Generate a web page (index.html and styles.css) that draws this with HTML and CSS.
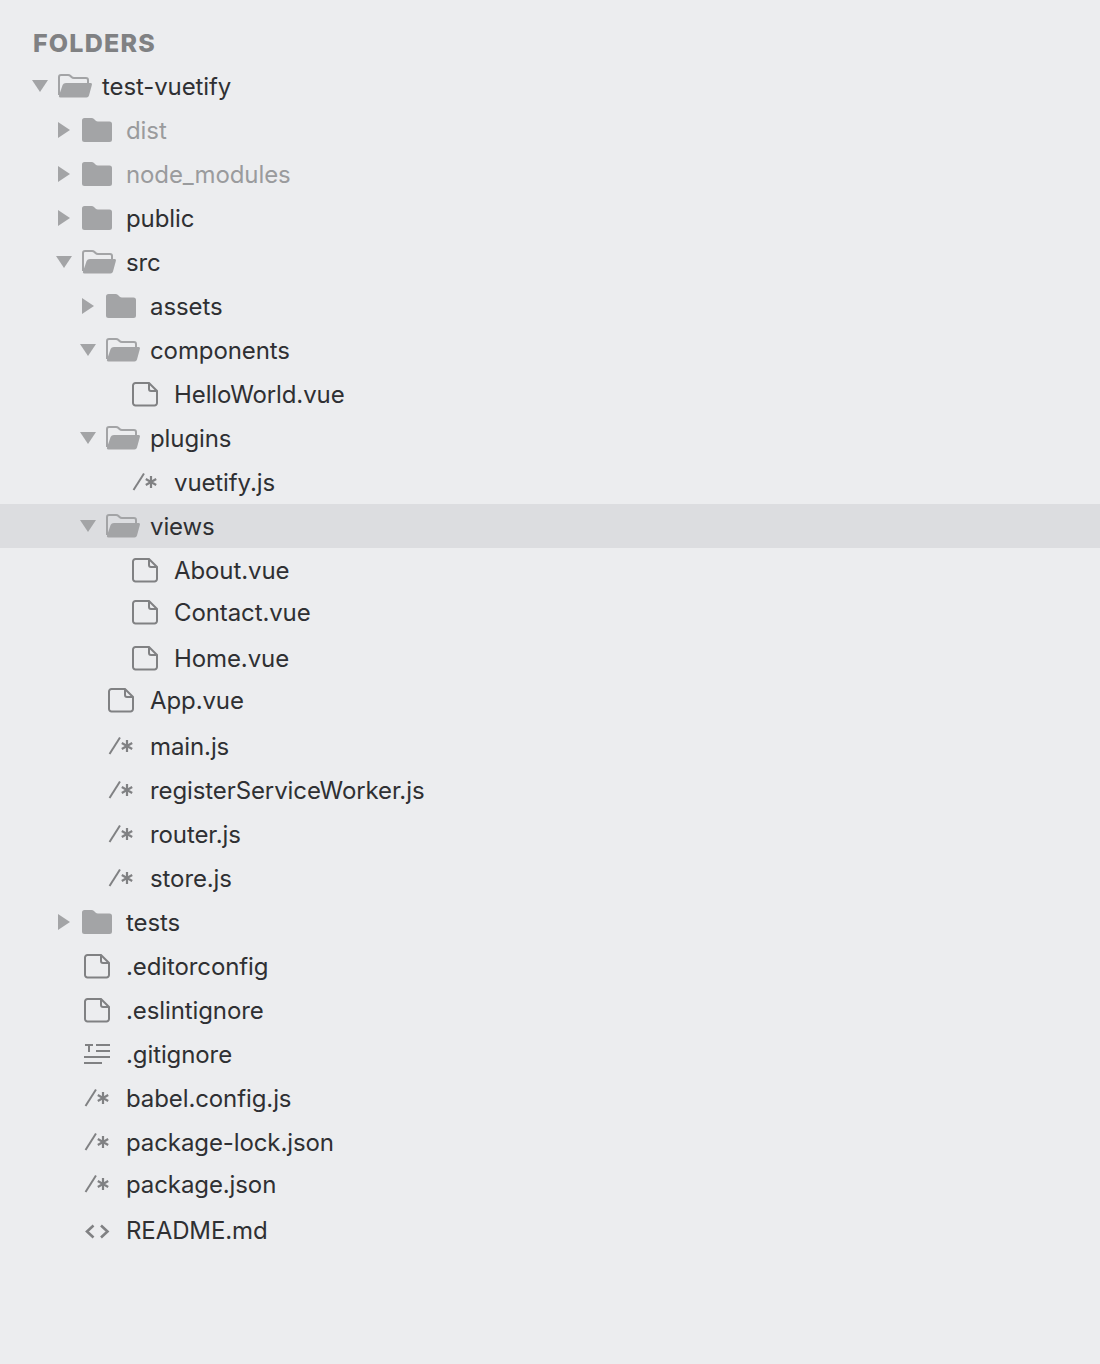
FILE: index.html
```html
<!DOCTYPE html>
<html lang="en">
<head>
<meta charset="utf-8">
<title>Folders</title>
<link rel="stylesheet" href="styles.css">
</head>
<body>
<svg class="defs" width="0" height="0" aria-hidden="true">
  <symbol id="arrow-right" viewBox="0 0 26 24"><path d="M2 3 L14 11 L2 19 Z"/></symbol>
  <symbol id="arrow-down" viewBox="0 0 26 24"><path d="M0 5 H16 L8 17 Z"/></symbol>
  <symbol id="folder" viewBox="0 0 34 26"><path d="M0 2.5 A2.5 2.5 0 0 1 2.5 0 H9.5 Q11 0 12 1 L13.5 2.5 Q14.5 3.5 16 3.5 H27.5 A2.5 2.5 0 0 1 30 6 V21.5 A2.5 2.5 0 0 1 27.5 24 H2.5 A2.5 2.5 0 0 1 0 21.5 Z"/></symbol>
  <symbol id="folder-open" viewBox="0 0 34 26"><path d="M1 21 V3 Q1 1 3 1 H10 Q11.5 1 12.5 2 L13.5 3 Q14.5 4 16 4 H28 Q30 4 30 6 V9" fill="none" stroke="currentColor" stroke-width="2"/><path d="M8 9 H32.5 Q34.3 9 33.9 10.7 L31 21.5 Q30.4 23.5 28.5 23.5 H2.5 Q0.5 23.5 1 21.5 L4.6 11 Q5.4 9 8 9 Z"/></symbol>
  <symbol id="file" viewBox="0 0 28 26"><path d="M3.5 1 H17 L25 9 V21 A2.5 2.5 0 0 1 22.5 23.5 H3.5 A2.5 2.5 0 0 1 1 21 V3.5 A2.5 2.5 0 0 1 3.5 1 Z M17 1 V7 A2 2 0 0 0 19 9 H25" fill="none" stroke="currentColor" stroke-width="2"/></symbol>
  <symbol id="comment" viewBox="0 0 28 26"><path d="M1.5 20 L12 3.5" fill="none" stroke="currentColor" stroke-width="2"/><path d="M19 6 V18 M13.8 9 L24.2 15 M24.2 9 L13.8 15" fill="none" stroke="currentColor" stroke-width="2.2"/></symbol>
  <symbol id="lines" viewBox="0 0 28 26"><path d="M1 3 H9 M5 3 V10 M12 3 H26 M12 9 H26 M0 15 H26 M0 21 H18" fill="none" stroke="currentColor" stroke-width="2"/></symbol>
  <symbol id="code" viewBox="0 0 28 26"><path d="M9.5 7.5 L3 13.5 L9.5 19.5 M17 7.5 L23.5 13.5 L17 19.5" fill="none" stroke="currentColor" stroke-width="2.6"/></symbol>
</svg>
<aside class="sidebar">
  <h2 class="heading">FOLDERS</h2>
  <ul class="tree">
    <li class="row l0"><svg class="arrow"><use href="#arrow-down"/></svg><svg class="icon"><use href="#folder-open"/></svg><span class="name">test-vuetify</span></li>
    <li class="row l1 muted"><svg class="arrow"><use href="#arrow-right"/></svg><svg class="icon"><use href="#folder"/></svg><span class="name">dist</span></li>
    <li class="row l1 muted"><svg class="arrow"><use href="#arrow-right"/></svg><svg class="icon"><use href="#folder"/></svg><span class="name">node_modules</span></li>
    <li class="row l1"><svg class="arrow"><use href="#arrow-right"/></svg><svg class="icon"><use href="#folder"/></svg><span class="name">public</span></li>
    <li class="row l1"><svg class="arrow"><use href="#arrow-down"/></svg><svg class="icon"><use href="#folder-open"/></svg><span class="name">src</span></li>
    <li class="row l2"><svg class="arrow"><use href="#arrow-right"/></svg><svg class="icon"><use href="#folder"/></svg><span class="name">assets</span></li>
    <li class="row l2"><svg class="arrow"><use href="#arrow-down"/></svg><svg class="icon"><use href="#folder-open"/></svg><span class="name">components</span></li>
    <li class="row l3"><span class="slot"></span><svg class="icon file"><use href="#file"/></svg><span class="name">HelloWorld.vue</span></li>
    <li class="row l2"><svg class="arrow"><use href="#arrow-down"/></svg><svg class="icon"><use href="#folder-open"/></svg><span class="name">plugins</span></li>
    <li class="row l3"><span class="slot"></span><svg class="icon file"><use href="#comment"/></svg><span class="name">vuetify.js</span></li>
    <li class="row l2 selected"><svg class="arrow"><use href="#arrow-down"/></svg><svg class="icon"><use href="#folder-open"/></svg><span class="name">views</span></li>
    <li class="row l3"><span class="slot"></span><svg class="icon file"><use href="#file"/></svg><span class="name">About.vue</span></li>
    <li class="row l3 up"><span class="slot"></span><svg class="icon file"><use href="#file"/></svg><span class="name">Contact.vue</span></li>
    <li class="row l3"><span class="slot"></span><svg class="icon file"><use href="#file"/></svg><span class="name">Home.vue</span></li>
    <li class="row l2 up"><span class="slot"></span><svg class="icon file"><use href="#file"/></svg><span class="name">App.vue</span></li>
    <li class="row l2"><span class="slot"></span><svg class="icon file"><use href="#comment"/></svg><span class="name">main.js</span></li>
    <li class="row l2"><span class="slot"></span><svg class="icon file"><use href="#comment"/></svg><span class="name">registerServiceWorker.js</span></li>
    <li class="row l2"><span class="slot"></span><svg class="icon file"><use href="#comment"/></svg><span class="name">router.js</span></li>
    <li class="row l2"><span class="slot"></span><svg class="icon file"><use href="#comment"/></svg><span class="name">store.js</span></li>
    <li class="row l1"><svg class="arrow"><use href="#arrow-right"/></svg><svg class="icon"><use href="#folder"/></svg><span class="name">tests</span></li>
    <li class="row l1"><span class="slot"></span><svg class="icon file"><use href="#file"/></svg><span class="name">.editorconfig</span></li>
    <li class="row l1"><span class="slot"></span><svg class="icon file"><use href="#file"/></svg><span class="name">.eslintignore</span></li>
    <li class="row l1"><span class="slot"></span><svg class="icon file"><use href="#lines"/></svg><span class="name">.gitignore</span></li>
    <li class="row l1"><span class="slot"></span><svg class="icon file"><use href="#comment"/></svg><span class="name">babel.config.js</span></li>
    <li class="row l1"><span class="slot"></span><svg class="icon file"><use href="#comment"/></svg><span class="name">package-lock.json</span></li>
    <li class="row l1 up"><span class="slot"></span><svg class="icon file"><use href="#comment"/></svg><span class="name">package.json</span></li>
    <li class="row l1"><span class="slot"></span><svg class="icon file"><use href="#code"/></svg><span class="name">README.md</span></li>
  </ul>
</aside>
</body>
</html>
```
FILE: styles.css
```css
html, body {
  margin: 0;
  padding: 0;
  background: #ecedef;
}
.defs {
  position: absolute;
}
.sidebar {
  height: 1364px;
  box-sizing: border-box;
  padding-top: 27px;
  overflow: hidden;
  font-family: Inter, "Noto Sans", sans-serif;
  color: #2f3033;
}
.heading {
  margin: 0 0 5px 33px;
  height: 32px;
  line-height: 32px;
  font-size: 25px;
  font-weight: 800;
  letter-spacing: 1.2px;
  color: #808183;
}
.tree {
  list-style: none;
  margin: 0;
  padding: 0;
}
.row {
  display: flex;
  align-items: center;
  height: 44px;
  font-size: 24px;
  letter-spacing: -0.1px;
}
.l0 { padding-left: 32px; }
.l1 { padding-left: 56px; }
.l2 { padding-left: 80px; }
.l3 { padding-left: 104px; }
.up {
  margin-top: -2px;
  margin-bottom: 2px;
}
.selected {
  background: #dcdde0;
}
.arrow, .slot {
  flex: none;
  width: 26px;
  height: 24px;
  margin-top: 2px;
}
.arrow {
  fill: #a3a4a6;
}
.icon {
  flex: none;
  width: 34px;
  height: 26px;
  margin-top: 2px;
  margin-right: 10px;
  fill: #a3a4a6;
  color: #a3a4a6;
}
.file {
  width: 28px;
  margin-right: 14px;
  margin-left: 2px;
  color: #808183;
}
.name {
  white-space: nowrap;
}
.muted .name {
  color: #9a9b9d;
}
```
